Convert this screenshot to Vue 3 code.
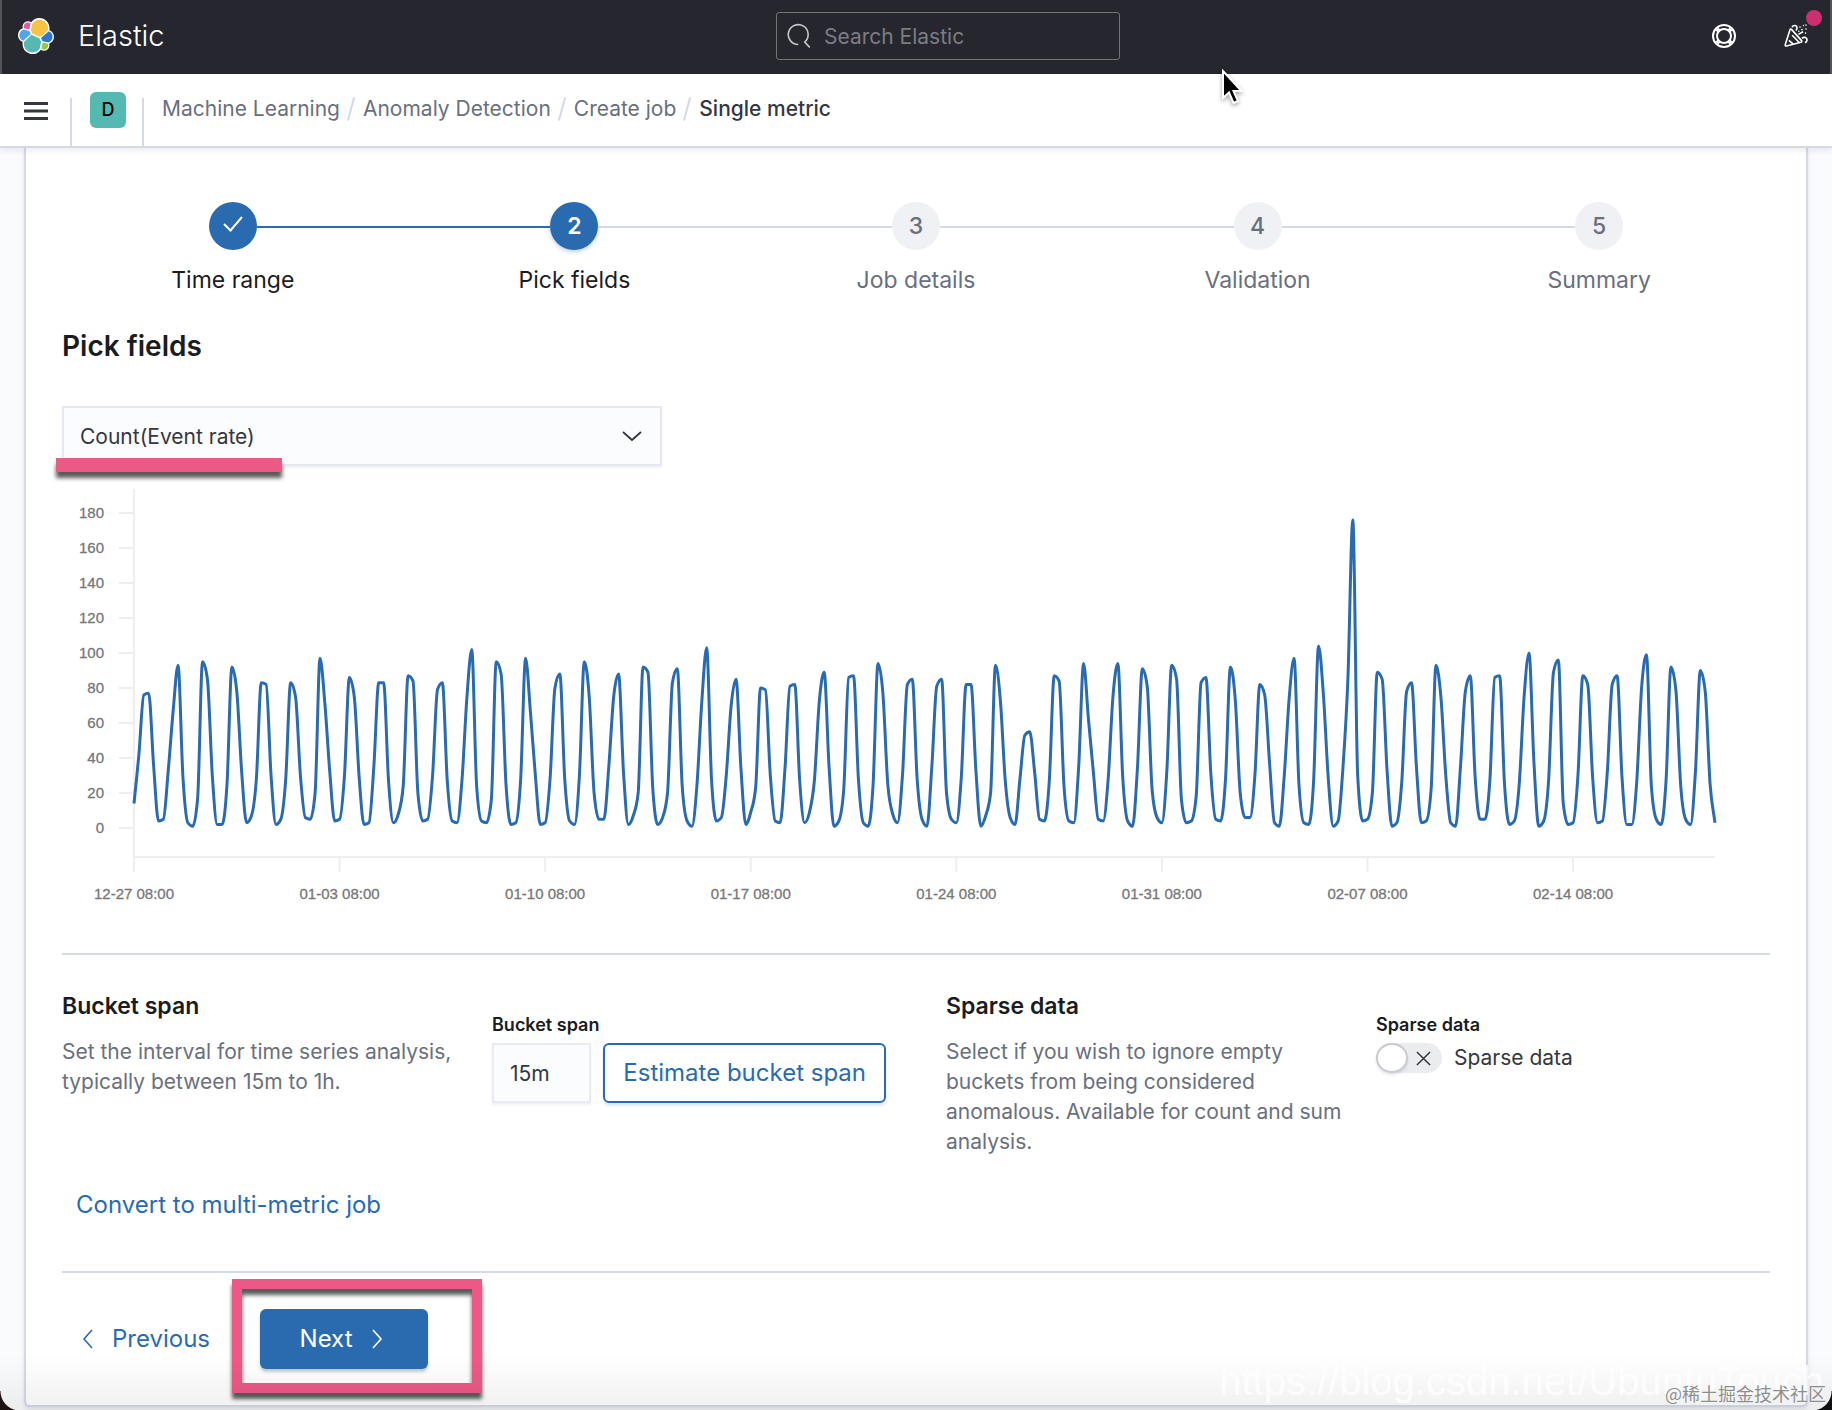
<template>
	<div class="page">
		<header class="top-bar">
			<a class="brand" href="#">
				<svg class="logo" viewBox="0 0 32 32" aria-hidden="true">
					<path fill="#fff" d="M32 16.77c0-2.68-1.66-5.03-4.16-5.94a9.07 9.07 0 00.18-1.74c0-4.97-4.02-8.99-8.97-8.99-2.9 0-5.59 1.39-7.28 3.74a4.716 4.716 0 00-2.91-.99 4.76 4.76 0 00-4.48 6.36A6.37 6.37 0 000 15.23c0 2.69 1.67 5.05 4.18 5.96a9.3 9.3 0 00-.18 1.74 8.97 8.97 0 0016.25 5.25c.83.65 1.85 1.01 2.9 1.01a4.76 4.76 0 004.47-6.37A6.38 6.38 0 0032 16.77" />
					<path fill="#f6c445" d="M12.58 13.787l7.002 3.211 7.066-6.213a7.849 7.849 0 00.152-1.557c0-4.287-3.464-7.775-7.72-7.775a7.725 7.725 0 00-6.397 3.396l-1.176 6.12z" />
					<path fill="#54b9b1" d="M5.333 21.228a7.964 7.964 0 00-.153 1.566c0 4.305 3.48 7.806 7.76 7.806a7.74 7.74 0 006.426-3.43l1.165-6.09-1.555-2.985-7.03-3.212z" />
					<path fill="#e05a9c" d="M5.288 9.067l4.8 1.136 1.05-5.474a3.8 3.8 0 00-2.3-.776 3.83 3.83 0 00-3.806 3.835c0 .44.105.882.256 1.279" />
					<path fill="#4fa6ee" d="M4.871 10.215C2.73 10.928 1.23 12.996 1.23 15.27c0 2.214 1.362 4.191 3.403 4.973l6.735-6.116-1.236-2.655z" />
					<path fill="#97c53f" d="M20.874 27.17a3.797 3.797 0 002.285.78 3.83 3.83 0 003.805-3.834c0-.44-.074-.866-.226-1.262l-4.797-1.127z" />
					<path fill="#3077cc" d="M21.847 20.564l5.28 1.245c2.145-.713 3.643-2.78 3.643-5.057a5.33 5.33 0 00-3.411-4.962l-6.907 6.068z" />
				</svg>
				<span>Elastic</span>
			</a>
			<div class="search">
				<svg viewBox="0 0 16 16" aria-hidden="true">
					<path d="M6.9 13.2A6.1 6.1 0 1 1 10.9 11.7L14 15" />
				</svg>
				<input type="text" v-model="query" placeholder="Search Elastic" aria-label="Search Elastic" />
			</div>
			<div class="actions">
				<button type="button" aria-label="Help">
					<svg viewBox="0 0 24 24" aria-hidden="true">
						<circle cx="12" cy="12" r="11" />
						<circle cx="12" cy="12" r="7" />
						<path class="thick" d="M4.8 4.8l2.4 2.4M19.2 4.8l-2.4 2.4M4.8 19.2l2.4-2.4M19.2 19.2l-2.4-2.4" />
					</svg>
				</button>
				<button type="button" class="news" aria-label="News">
					<svg viewBox="0 0 24 24" aria-hidden="true">
						<path d="M7.5 5.4L17.6 16.6a1 1 0 0 1-.5 1.6L2.4 22a1 1 0 0 1-1.2-1.3L6 5.7a.9.9 0 0 1 1.5-.3z" />
						<path d="M8.2 11.2l7 7.3M4.9 16.4l4.3 3.8" />
						<path d="M8 3.4c1-2.6 4.8-2.6 5 .5.1 1-.4 1.8-1.1 2.6M18 14.4c2-2.2 5.4-.6 5 2-.2 1.2-1.2 1.9-2 2.3M14.4 10.4l4.6-2.6" />
						<path class="dots" d="M16 3v.1M19.5 1.5v.1M22 1v.1M18 5.6v.1M22 5v.1M14.8 7.2v.1M21.5 9v.1" />
					</svg>
					<span class="badge"></span>
				</button>
			</div>
		</header>

		<nav class="nav-bar" aria-label="Breadcrumb">
			<button type="button" class="menu" aria-label="Toggle navigation">
				<svg viewBox="0 0 24 18" aria-hidden="true">
					<path d="M0 1.5h24M0 9h24M0 16.5h24" />
				</svg>
			</button>
			<button type="button" class="space"><span>D</span></button>
			<ol class="crumbs">
				<li v-for="crumb of crumbs" :key="crumb"><a href="#">{{crumb}}</a></li>
				<li><strong>Single metric</strong></li>
			</ol>
		</nav>

		<main class="panel">
			<ol class="steps">
				<li v-for="(step, i) of steps" :key="step.title" :class="step.status">
					<span class="dot">
						<svg v-if="step.status === 'complete'" viewBox="0 0 24 24" aria-hidden="true">
							<path d="M3 10l6.500 6.500L21 3" />
						</svg>
						<template v-else>{{i + 1}}</template>
					</span>
					<span class="step-title">{{step.title}}</span>
				</li>
			</ol>

			<h2>Pick fields</h2>

			<div class="field-select">
				<select v-model="field" aria-label="Field">
					<option>Count(Event rate)</option>
				</select>
				<svg viewBox="0 0 24 24" aria-hidden="true"><path d="M3 8l9 8 9-8" /></svg>
				<span class="underline-mark"></span>
			</div>

			<svg class="chart" viewBox="0 0 1708 430" role="img" aria-label="Event rate">
				<path class="axis" d="M72 8V391M72 376H1653" />
				<g v-for="value of yTicks" :key="value">
					<path class="axis" :d="`M57 ${yOf(value)}h15`" />
					<text x="42" :y="yOf(value) + 5" text-anchor="end">{{value}}</text>
				</g>
				<g v-for="(label, i) of xTicks" :key="label">
					<path class="axis" :d="`M${xOf(i * 42)} 376v15`" />
					<text :x="xOf(i * 42)" y="418" text-anchor="middle">{{label}}</text>
				</g>
				<path class="line" :d="linePath" />
			</svg>

			<section class="settings">
				<div class="setting">
					<div class="about">
						<h3>Bucket span</h3>
						<p>Set the interval for time series analysis, typically between 15m to 1h.</p>
					</div>
					<div class="control">
						<label class="control-title" for="bucket-span">Bucket span</label>
						<div class="bucket-row">
							<input id="bucket-span" type="text" v-model="bucketSpan" />
							<button type="button" class="outline">Estimate bucket span</button>
						</div>
					</div>
				</div>
				<div class="setting">
					<div class="about">
						<h3>Sparse data</h3>
						<p>Select if you wish to ignore empty buckets from being considered anomalous. Available for count and sum analysis.</p>
					</div>
					<div class="control">
						<span class="control-title">Sparse data</span>
						<label class="switch">
							<input type="checkbox" v-model="sparse" />
							<span class="track">
								<span class="thumb"></span>
								<svg viewBox="0 0 16 16" aria-hidden="true"><path d="M1 1l14 14M15 1L1 15" /></svg>
							</span>
							<span>Sparse data</span>
						</label>
					</div>
				</div>
			</section>

			<button type="button" class="convert">Convert to multi-metric job</button>

			<footer class="pager">
				<button type="button" class="previous">
					<svg viewBox="0 0 12 20" aria-hidden="true"><path d="M10 1L2 10l8 9" /></svg>
					Previous
				</button>
				<div class="next-wrap">
					<button type="button" class="next">
						Next
						<svg viewBox="0 0 12 20" aria-hidden="true"><path d="M2 1l8 9-8 9" /></svg>
					</button>
					<span class="box-mark"></span>
				</div>
			</footer>
		</main>

		<div class="shade"></div>
		<i class="corner left"></i>
		<i class="corner right"></i>
		<span class="blog-mark">https://blog.csdn.net/UbuntuTouch</span>
		<span class="site-mark">@稀土掘金技术社区</span>
		<svg class="pointer" viewBox="0 0 22 38" aria-hidden="true">
			<path d="M2 2v27l6-5.500 4.500 10.500 4.500-2-4.500-10h8z" />
		</svg>
	</div>
</template>

<script setup>
	import { ref } from "vue";


	const query = ref("");
	const field = ref("Count(Event rate)");
	const bucketSpan = ref("15m");
	const sparse = ref(false);

	const crumbs = ["Machine Learning", "Anomaly Detection", "Create job"];

	const steps = [
		{ title: "Time range", status: "complete" },
		{ title: "Pick fields", status: "current" },
		{ title: "Job details", status: "" },
		{ title: "Validation", status: "" },
		{ title: "Summary", status: "" },
	];

	const yTicks = [0, 20, 40, 60, 80, 100, 120, 140, 160, 180];
	const xTicks = ["12-27", "01-03", "01-10", "01-17", "01-24", "01-31", "02-07", "02-14"].map(day => `${day} 08:00`);

	// event counts in 4 hour buckets, one row per 2 days
	const counts = [
		14, 42, 76, 77, 36, 4, 5, 33, 67, 93, 29, 3,
		1, 17, 95, 85, 30, 2, 2, 25, 92, 78, 32, 3,
		7, 28, 83, 82, 30, 2, 5, 28, 83, 75, 30, 6,
		5, 20, 97, 71, 32, 4, 5, 30, 86, 75, 29, 2,
		3, 35, 83, 83, 27, 3, 8, 24, 87, 84, 20, 4,
		5, 30, 79, 83, 27, 4, 3, 27, 74, 102, 24, 4,
		3, 16, 95, 88, 25, 2, 3, 28, 97, 66, 30, 2,
		3, 28, 80, 88, 28, 4, 2, 30, 95, 75, 20, 5,
		5, 35, 75, 88, 32, 2, 7, 20, 92, 89, 22, 2,
		6, 20, 83, 91, 24, 4, 1, 24, 72, 103, 27, 4,
		6, 30, 70, 85, 34, 2, 9, 23, 80, 79, 30, 4,
		3, 34, 81, 82, 27, 3, 9, 27, 72, 89, 35, 1,
		4, 22, 86, 87, 28, 3, 1, 25, 94, 77, 25, 8,
		3, 30, 82, 85, 28, 5, 1, 35, 81, 85, 20, 5,
		3, 28, 82, 82, 33, 1, 7, 20, 93, 73, 27, 6,
		2, 28, 53, 55, 32, 5, 4, 27, 87, 84, 24, 4,
		3, 35, 94, 62, 32, 5, 4, 27, 75, 94, 29, 4,
		1, 34, 91, 81, 22, 6, 3, 32, 93, 85, 16, 3,
		4, 18, 83, 86, 31, 5, 4, 28, 92, 73, 20, 6,
		6, 30, 82, 76, 37, 3, 1, 30, 74, 97, 25, 3,
		2, 27, 104, 76, 28, 1, 4, 35, 85, 176, 30, 4,
		5, 20, 89, 85, 33, 1, 3, 26, 78, 83, 35, 3,
		4, 22, 93, 75, 30, 3, 1, 35, 78, 87, 29, 5,
		5, 27, 86, 87, 25, 2, 4, 25, 75, 100, 38, 1,
		4, 27, 89, 96, 14, 2, 3, 30, 87, 82, 29, 3,
		4, 32, 82, 87, 29, 2, 2, 26, 80, 99, 24, 5,
		2, 27, 92, 79, 24, 5, 2, 32, 90, 78, 25, 3,
	];

	const xStep = 1581 / (counts.length - 1);
	const xOf = index => 72 + index * xStep;
	const yOf = value => 347 - value * 1.75;


	// monotone cubic, so the curve never overshoots a bucket
	const drawLine = values => {
		const ys = values.map(yOf);
		const slopes = ys.slice(1).map((y, i) => (y - ys[i]) / xStep);
		const tangents = ys.map((_, i) => {
			const before = slopes[i - 1];
			const after = slopes[i];
			if (before === undefined)
				return after;
			if (after === undefined)
				return before;
			if (before * after <= 0)
				return 0;

			return Math.sign(before) * 2 * Math.min(Math.abs(before), Math.abs(after), Math.abs(before + after) / 4);
		});

		let path = `M${xOf(0)} ${ys[0]}`;
		for (let i = 1; i < ys.length; ++i) {
			const dx = xStep / 3;
			path += `C${xOf(i - 1) + dx} ${ys[i - 1] + dx * tangents[i - 1]} ${xOf(i) - dx} ${ys[i] - dx * tangents[i]} ${xOf(i)} ${ys[i]}`;
		}

		return path;
	};

	const linePath = drawLine(counts);
</script>

<style>
	body
	{
		margin: 0;
		background: #fafbfd;
	}
</style>

<style scoped>
	.page
	{
		position: relative;
		min-height: 100vh;
		box-sizing: border-box;
		padding-bottom: 4px;
		overflow: hidden;
		font-family: Inter, "Liberation Sans", "Noto Sans CJK SC", sans-serif;
		font-size: 21px;
		line-height: 30px;
		color: #343741;
	}

	button, input, select
	{
		font: inherit;
		color: inherit;
		box-sizing: border-box;
		margin: 0;
	}

	button
	{
		padding: 0;
		border: 0;
		background: none;
		cursor: pointer;
	}

	svg
	{
		fill: none;
		stroke: currentColor;
	}

	ol, h2, h3, p
	{
		list-style: none;
		margin: 0;
		padding: 0;
	}

	a
	{
		color: inherit;
		text-decoration: none;
	}

	/* top bar */
	.top-bar
	{
		display: flex;
		align-items: center;
		justify-content: space-between;
		height: 74px;
		box-sizing: border-box;
		padding-bottom: 2px;
		background: #25262e;
		border: solid #535459;
		border-width: 0 2px;
		color: #fff;
	}

	.brand
	{
		display: flex;
		align-items: center;
		gap: 24px;
		min-width: 166px;
		padding-left: 16px;
		font-size: 29px;
		font-weight: 300;
	}

	.logo
	{
		width: 36px;
		height: 36px;
		stroke: none;
	}

	.search
	{
		display: flex;
		align-items: center;
		gap: 11px;
		width: 344px;
		height: 48px;
		box-sizing: border-box;
		padding: 0 10px;
		border: 1px solid #737479;
		border-radius: 3px;
	}

	.search svg
	{
		flex: none;
		width: 26px;
		height: 26px;
		color: #c4c5c8;
	}

	.search input
	{
		flex: 1;
		min-width: 0;
		padding: 2px 0 0;
		border: 0;
		outline: 0;
		background: none;
	}

	.search input::placeholder
	{
		color: #7c7d82;
		opacity: 1;
	}

	.actions
	{
		display: flex;
		gap: 48px;
		padding-right: 22px;
	}

	.actions button
	{
		position: relative;
		width: 24px;
		height: 24px;
	}

	.actions svg
	{
		display: block;
		stroke-width: 2;
	}

	.actions .thick
	{
		stroke-width: 4;
	}

	.actions .news svg
	{
		stroke-width: 1.6;
	}

	.actions .dots
	{
		stroke-linecap: round;
	}

	.badge
	{
		position: absolute;
		top: -14px;
		right: -14px;
		width: 16px;
		height: 16px;
		border-radius: 50%;
		background: #ca2f6f;
	}

	/* breadcrumb bar */
	.nav-bar
	{
		position: relative;
		display: flex;
		align-items: flex-end;
		height: 74px;
		box-sizing: border-box;
		background: #fff;
		border-bottom: 2px solid #d3dae6;
		box-shadow: 0 2px 6px rgba(50, 70, 110, .12);
	}

	.nav-bar button
	{
		width: 72px;
		height: 48px;
		border-right: 2px solid #d3dae6;
	}

	.menu svg
	{
		display: block;
		width: 24px;
		height: 18px;
		margin: -20px 24px 0;
		stroke-width: 3;
	}

	.space span
	{
		display: block;
		width: 36px;
		margin: -24px 16px 0 18px;
		border-radius: 6px;
		background: #54b9b1;
		color: #000;
		font-size: 18px;
		font-weight: 500;
		line-height: 36px;
	}

	.crumbs
	{
		display: flex;
		padding: 0 18px 22px;
		color: #69707d;
	}

	.crumbs li + li::before
	{
		content: "";
		display: inline-block;
		width: 2px;
		height: 24px;
		margin: 0 11px 0 10px;
		background: #d3dae6;
		transform: rotate(15deg);
		vertical-align: -5px;
	}

	.crumbs strong
	{
		font-weight: 500;
		color: #343741;
	}

	/* wizard */
	.panel
	{
		margin: 0 24px;
		padding: 54px 36px 36px;
		background: #fff;
		border: 2px solid #d3dae6;
		border-top: 0;
		border-radius: 0 0 6px 6px;
		box-shadow: 0 2px 4px rgba(50, 70, 110, .15);
	}

	.steps
	{
		display: flex;
		font-size: 23px;
		color: #69707d;
	}

	.steps li
	{
		position: relative;
		flex: 1;
		display: flex;
		flex-direction: column;
		align-items: center;
		gap: 15px;
	}

	.steps li + li::before
	{
		content: "";
		position: absolute;
		top: 24px;
		right: calc(50% + 24px);
		width: calc(100% - 48px);
		height: 2px;
		background: #d3dae6;
	}

	.steps li.current::before
	{
		background: #2a6bb0;
	}

	.dot
	{
		display: flex;
		align-items: center;
		justify-content: center;
		width: 48px;
		height: 48px;
		border-radius: 50%;
		background: #f0f1f4;
		font-weight: 500;
	}

	.dot svg
	{
		width: 24px;
		height: 24px;
		stroke-width: 2;
	}

	.complete, .current
	{
		color: #1a1c21;
	}

	.complete .dot, .current .dot
	{
		background: #2a6bb0;
		color: #fff;
	}

	.current .dot
	{
		font-weight: 600;
		box-shadow: 0 2px 4px rgba(42, 107, 176, .3);
	}

	h2
	{
		margin-top: 31px;
		font-size: 28px;
		font-weight: 600;
		line-height: 40px;
		color: #1a1c21;
	}

	.field-select
	{
		position: relative;
		max-width: 600px;
		height: 60px;
		margin-top: 40px;
	}

	.field-select select
	{
		width: 100%;
		height: 60px;
		padding: 2px 16px 0;
		appearance: none;
		background: #fbfcfd;
		border: 2px solid #e5e8f1;
		border-radius: 0;
		box-shadow: 0 2px 2px rgba(152, 162, 179, .15);
	}

	.field-select svg
	{
		position: absolute;
		top: 18px;
		right: 18px;
		width: 24px;
		height: 24px;
		stroke-width: 1.8;
		pointer-events: none;
	}

	.underline-mark
	{
		position: absolute;
		left: -6px;
		top: 52px;
		width: 226px;
		height: 14px;
		background: #ec5987;
		box-shadow: 0 6px 4px rgba(0, 0, 0, .65);
	}

	.chart
	{
		display: block;
		width: 100%;
		margin-top: 15px;
		stroke-width: 2;
	}

	.chart .axis
	{
		stroke: #eee;
	}

	.chart .line
	{
		stroke: #2a6bb0;
		stroke-width: 3;
	}

	.chart text
	{
		fill: #777;
		stroke: #777;
		stroke-width: .3;
		font: 15px "Liberation Sans", sans-serif;
	}

	.settings
	{
		display: grid;
		grid-template-columns: repeat(2, minmax(0, 1fr));
		gap: 60px;
		margin-top: 42px;
		padding-top: 36px;
		border-top: 2px solid #d3dae6;
	}

	.setting
	{
		display: grid;
		grid-template-columns: repeat(2, minmax(0, 1fr));
		gap: 36px;
	}

	h3
	{
		font-size: 23px;
		font-weight: 600;
		line-height: 30px;
		margin-bottom: 16px;
		color: #1a1c21;
	}

	.about p
	{
		margin-right: -16px;
		color: #69707d;
	}

	.control
	{
		padding-top: 19px;
	}

	.control-title
	{
		display: block;
		margin-bottom: 3px;
		font-size: 18px;
		font-weight: 600;
		color: #1a1c21;
	}

	.bucket-row
	{
		display: flex;
		gap: 12px;
	}

	.bucket-row input
	{
		flex: 1;
		min-width: 0;
		height: 60px;
		padding: 0 16px;
		background: #fbfcfd;
		border: 2px solid #e9ebf2;
		box-shadow: 0 2px 2px rgba(152, 162, 179, .15);
	}

	.outline
	{
		height: 60px;
		padding: 0 18px;
		border: 2px solid #2a6bb0;
		border-radius: 6px;
		box-shadow: 0 3px 3px rgba(54, 97, 126, .15);
		color: #2a6bb0;
		font-size: 24px;
		white-space: nowrap;
	}

	.switch
	{
		display: flex;
		align-items: center;
		gap: 12px;
		width: max-content;
	}

	.switch input
	{
		position: absolute;
		opacity: 0;
	}

	.track
	{
		display: flex;
		align-items: center;
		gap: 8px;
		width: 66px;
		height: 30px;
		border-radius: 15px;
		background: #ebecf0;
	}

	.thumb
	{
		width: 32px;
		height: 30px;
		box-sizing: border-box;
		border: 2px solid #c9cbcd;
		border-radius: 50%;
		background: #fff;
		box-shadow: 0 2px 3px rgba(152, 162, 179, .3);
	}

	.track svg
	{
		width: 15px;
		height: 15px;
		stroke-width: 1.6;
	}

	input:checked + .track
	{
		flex-direction: row-reverse;
		background: #2a6bb0;
	}

	.convert
	{
		display: block;
		height: 60px;
		margin-top: 18px;
		padding: 0 14px;
		font-size: 24px;
		color: #2a6bb0;
	}

	.pager
	{
		display: flex;
		align-items: center;
		gap: 38px;
		margin-top: 36px;
		padding-top: 36px;
		border-top: 2px solid #d3dae6;
		font-size: 24px;
	}

	.pager button
	{
		display: flex;
		align-items: center;
		gap: 18px;
		height: 60px;
	}

	.pager svg
	{
		width: 12px;
		height: 20px;
		stroke-width: 1.6;
	}

	.previous
	{
		padding: 0 12px 0 20px;
		color: #2a6bb0;
	}

	.next-wrap
	{
		position: relative;
	}

	.next
	{
		justify-content: center;
		width: 168px;
		padding-right: 6px;
		border-radius: 6px;
		background: #2a6bb0;
		color: #fff;
		box-shadow: 0 3px 3px rgba(54, 97, 126, .3);
	}

	.box-mark
	{
		position: absolute;
		left: -28px;
		top: -30px;
		width: 250px;
		height: 114px;
		box-sizing: border-box;
		border: 10px solid #ec5987;
		box-shadow: 0 6px 4px rgba(0, 0, 0, .65), inset 0 6px 4px rgba(0, 0, 0, .65);
		pointer-events: none;
	}

	/* window edge and marks */
	.shade
	{
		position: absolute;
		inset: auto 0 0;
		height: 56px;
		background: linear-gradient(rgba(0, 0, 0, 0), rgba(0, 0, 0, .06));
		pointer-events: none;
	}

	.corner
	{
		position: absolute;
		bottom: 0;
		width: 20px;
		height: 20px;
	}

	.corner.left
	{
		left: 0;
		background: radial-gradient(circle at 100% 0, transparent 19px, #1c1210 20px);
	}

	.corner.right
	{
		right: 0;
		background: radial-gradient(circle at 0 0, transparent 19px, #100f12 20px);
	}

	.blog-mark
	{
		position: absolute;
		right: 8px;
		bottom: 8px;
		font: 40px/44px "Liberation Sans", sans-serif;
		color: rgba(255, 255, 255, .8);
		pointer-events: none;
	}

	.site-mark
	{
		position: absolute;
		right: 6px;
		bottom: 4px;
		font: 18px/28px "Noto Sans CJK SC", sans-serif;
		color: #8e8e90;
		text-shadow: 0 0 1px #fff;
		pointer-events: none;
	}

	.pointer
	{
		position: absolute;
		left: 1221px;
		top: 69px;
		width: 22px;
		height: 38px;
		fill: #000;
		stroke: #fff;
		stroke-width: 2;
		filter: drop-shadow(0 2px 2px rgba(0, 0, 0, .35));
		pointer-events: none;
	}
</style>
